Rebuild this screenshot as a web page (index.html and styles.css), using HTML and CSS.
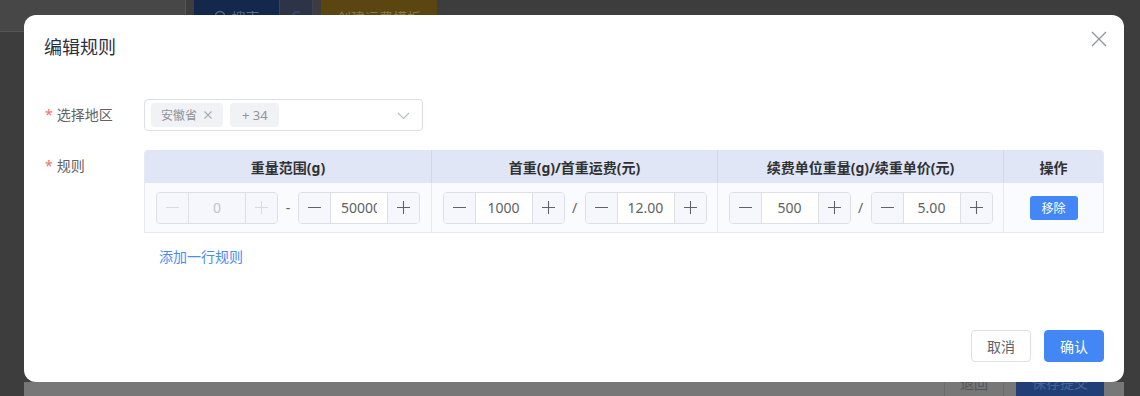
FILE: index.html
```html
<!DOCTYPE html>
<html lang="zh-CN">
<head>
  <meta charset="UTF-8">
  <title>编辑规则</title>
  <link rel="stylesheet" href="styles.css">
</head>
<body>
  <!-- page behind the dialog, already dimmed -->
  <div class="page">
    <div class="toolbar">
      <div class="tb-input"></div>
      <div class="tb-btn tb-search">
        <svg width="14" height="14" viewBox="0 0 14 14"><circle cx="6" cy="6" r="4.5" fill="none" stroke="#5a6a85" stroke-width="1.5"/></svg>
        搜索
      </div>
      <div class="tb-btn tb-refresh">C</div>
      <div class="tb-btn tb-create">创建运费模板</div>
    </div>
    <div class="page-main"></div>
    <div class="page-foot">
      <div class="pf-btn pf-back">退回</div>
      <div class="pf-btn pf-save">保存提交</div>
    </div>
  </div>

  <div class="dialog">
    <div class="dialog-header">
      <span class="dialog-title">编辑规则</span>
      <svg class="dialog-close" width="16" height="16" viewBox="0 0 16 16">
        <path d="M1 1 L15 15 M15 1 L1 15" stroke="#909399" stroke-width="1.3" fill="none"/>
      </svg>
    </div>

    <div class="dialog-body">
      <div class="form-item">
        <label class="form-label"><span class="req">*</span>选择地区</label>
        <div class="select">
          <span class="tag">安徽省
            <svg class="tag-close" width="10" height="10" viewBox="0 0 10 10"><path d="M1.5 1.5 L8.5 8.5 M8.5 1.5 L1.5 8.5" stroke="#a8abb2" stroke-width="1.1"/></svg>
          </span>
          <span class="tag tag-more">+ 34</span>
          <svg class="select-arrow" width="13" height="13" viewBox="0 0 13 13"><path d="M1 4 L6.5 9.5 L12 4" stroke="#b8bcc6" stroke-width="1.1" fill="none"/></svg>
        </div>
      </div>

      <div class="form-item">
        <label class="form-label"><span class="req">*</span>规则</label>
        <div class="rule-table">
          <div class="th">重量范围(g)</div>
          <div class="th">首重(g)/首重运费(元)</div>
          <div class="th">续费单位重量(g)/续重单价(元)</div>
          <div class="th">操作</div>

          <div class="td">
            <div class="num is-disabled">
              <span class="num-btn"><svg width="13" height="13" viewBox="0 0 13 13"><path d="M0 6.5 H13" stroke="currentColor" stroke-width="1.1"/></svg></span>
              <input class="num-input" value="0" disabled>
              <span class="num-btn"><svg width="13" height="13" viewBox="0 0 13 13"><path d="M0 6.5 H13 M6.5 0 V13" stroke="currentColor" stroke-width="1.1"/></svg></span>
            </div>
            <span class="sep">-</span>
            <div class="num">
              <span class="num-btn"><svg width="13" height="13" viewBox="0 0 13 13"><path d="M0 6.5 H13" stroke="currentColor" stroke-width="1.1"/></svg></span>
              <input class="num-input" value="50000">
              <span class="num-btn"><svg width="13" height="13" viewBox="0 0 13 13"><path d="M0 6.5 H13 M6.5 0 V13" stroke="currentColor" stroke-width="1.1"/></svg></span>
            </div>
          </div>

          <div class="td">
            <div class="num">
              <span class="num-btn"><svg width="13" height="13" viewBox="0 0 13 13"><path d="M0 6.5 H13" stroke="currentColor" stroke-width="1.1"/></svg></span>
              <input class="num-input" value="1000">
              <span class="num-btn"><svg width="13" height="13" viewBox="0 0 13 13"><path d="M0 6.5 H13 M6.5 0 V13" stroke="currentColor" stroke-width="1.1"/></svg></span>
            </div>
            <span class="sep">/</span>
            <div class="num">
              <span class="num-btn"><svg width="13" height="13" viewBox="0 0 13 13"><path d="M0 6.5 H13" stroke="currentColor" stroke-width="1.1"/></svg></span>
              <input class="num-input" value="12.00">
              <span class="num-btn"><svg width="13" height="13" viewBox="0 0 13 13"><path d="M0 6.5 H13 M6.5 0 V13" stroke="currentColor" stroke-width="1.1"/></svg></span>
            </div>
          </div>

          <div class="td">
            <div class="num">
              <span class="num-btn"><svg width="13" height="13" viewBox="0 0 13 13"><path d="M0 6.5 H13" stroke="currentColor" stroke-width="1.1"/></svg></span>
              <input class="num-input" value="500">
              <span class="num-btn"><svg width="13" height="13" viewBox="0 0 13 13"><path d="M0 6.5 H13 M6.5 0 V13" stroke="currentColor" stroke-width="1.1"/></svg></span>
            </div>
            <span class="sep">/</span>
            <div class="num">
              <span class="num-btn"><svg width="13" height="13" viewBox="0 0 13 13"><path d="M0 6.5 H13" stroke="currentColor" stroke-width="1.1"/></svg></span>
              <input class="num-input" value="5.00">
              <span class="num-btn"><svg width="13" height="13" viewBox="0 0 13 13"><path d="M0 6.5 H13 M6.5 0 V13" stroke="currentColor" stroke-width="1.1"/></svg></span>
            </div>
          </div>

          <div class="td">
            <button class="btn-remove">移除</button>
          </div>
        </div>
      </div>

      <a class="add-link">添加一行规则</a>
    </div>

    <div class="dialog-footer">
      <button class="btn">取消</button>
      <button class="btn btn-primary">确认</button>
    </div>
  </div>
</body>
</html>
```

FILE: styles.css
```css
* {
  box-sizing: border-box;
}

body {
  margin: 0;
  height: 396px;
  overflow: hidden;
  background: #3d3d3d;
  font-family: "Noto Sans", "Noto Sans CJK SC", sans-serif;
  font-size: 14px;
  color: #606266;
}

/* Background page (dimmed) */
.page {
  height: 396px;
  display: flex;
  flex-direction: column;
}

.toolbar {
  height: 15px;
  display: flex;
  align-items: flex-start;
}

.tb-input {
  width: 186px;
  height: 32px;
  background: #474747;
  border: 1px solid #565656;
  border-left: none;
  border-top: none;
  border-radius: 0 0 4px 0;
  margin-right: 8px;
}

.tb-btn {
  height: 34px;
  display: flex;
  align-items: center;
  justify-content: center;
  gap: 4px;
  font-size: 14px;
  border-radius: 0 0 4px 4px;
  position: relative;
}

.tb-search {
  width: 85px;
  background: #13284a;
  color: #5a6a85;
  border-radius: 0 0 0 4px;
}

.tb-refresh {
  width: 34px;
  background: #2c3446;
  color: #31466e;
  font-weight: 700;
  font-size: 16px;
  border: 1px solid #39435a;
  border-top: none;
  border-radius: 0 0 4px 0;
  margin-right: 8px;
}

.tb-create {
  width: 116px;
  background: #5b4511;
  color: #8a7744;
}

.page-main {
  flex: 1;
}

.page-foot {
  height: 14px;
  margin: 0 16px 0 24px;
  background: #777;
  display: flex;
  justify-content: flex-end;
  align-items: flex-end;
  gap: 12px;
  padding-right: 20px;
}

.pf-btn {
  height: 32px;
  border-radius: 4px 4px 0 0;
  display: flex;
  align-items: center;
  justify-content: center;
  font-size: 14px;
  padding-top: 4px;
}

.pf-back {
  width: 60px;
  border: 1px solid #6c6c6c;
  border-bottom: none;
  color: #555;
}

.pf-save {
  width: 88px;
  background: #213f76;
  color: #4a6393;
}

/* Dialog */
.dialog {
  position: absolute;
  left: 24px;
  top: 15px;
  width: 1100px;
  height: 367px;
  background: #fff;
  border-radius: 12px;
  display: flex;
  flex-direction: column;
  z-index: 2;
}

.dialog-header {
  padding: 20px 20px 10px;
  position: relative;
}

.dialog-title {
  font-size: 18px;
  line-height: 24px;
  color: #2c3142;
}

.dialog-close {
  position: absolute;
  top: 16px;
  right: 17px;
}

.dialog-body {
  padding: 30px 20px 0;
}

.form-item {
  display: flex;
  margin-bottom: 19px;
}

.form-label {
  width: 100px;
  flex-shrink: 0;
  line-height: 32px;
  color: #606266;
  padding-left: 1px;
}

.req {
  color: #f56c6c;
  margin-right: 4px;
}

.select {
  width: 279px;
  height: 32px;
  border: 1px solid #dcdfe6;
  border-radius: 4px;
  display: flex;
  align-items: center;
  gap: 7px;
  padding: 0 12px 0 6px;
}

.tag {
  height: 24px;
  display: inline-flex;
  align-items: center;
  padding: 0 10px;
  background: #f0f2f5;
  border-radius: 4px;
  font-size: 12px;
  color: #909399;
}

.tag-more {
  padding: 0 11px 0 12px;
  font-size: 13px;
}

.tag-close {
  margin-left: 6px;
}

.select-arrow {
  margin-left: auto;
}

/* rule table */
.rule-table {
  flex: 1;
  display: grid;
  grid-template-columns: 287px 286px 286px 1fr;
  grid-template-rows: 33px 49px;
  border: 1px solid #e6e9f2;
  border-top: none;
  border-radius: 4px 4px 0 0;
  overflow: hidden;
}

.th {
  background: #e1e6f6;
  display: flex;
  align-items: center;
  justify-content: center;
  font-weight: 700;
  color: #303133;
  border-right: 1px solid #d3d8e8;
}

.td {
  background: #fafbff;
  display: flex;
  align-items: center;
  justify-content: center;
  gap: 7px;
  border-right: 1px solid #e6e9f2;
}

.th:nth-child(4),
.td:last-child {
  border-right: none;
}

.sep {
  width: 6px;
  text-align: center;
  color: #606266;
}

.num {
  width: 122px;
  height: 32px;
  display: flex;
  border: 1px solid #dcdfe6;
  border-radius: 4px;
  overflow: hidden;
  background: #fff;
}

.num-btn {
  width: 32px;
  flex-shrink: 0;
  display: flex;
  align-items: center;
  justify-content: center;
  background: #f5f7fc;
  color: #606266;
}

.num-btn:first-child {
  border-right: 1px solid #dcdfe6;
}

.num-btn:last-child {
  border-left: 1px solid #dcdfe6;
}

.num-input {
  width: 56px;
  min-width: 0;
  flex: 1;
  border: none;
  outline: none;
  padding: 0 10px;
  font: inherit;
  font-size: 14px;
  color: #606266;
  text-align: center;
  background: #fff;
}

.num.is-disabled,
.num.is-disabled .num-input,
.num.is-disabled .num-btn {
  background: #f5f7fc;
  color: #c0c4cc;
}

.num.is-disabled .num-btn {
  color: #d6dae2;
}

.btn-remove {
  width: 48px;
  height: 24px;
  border: none;
  border-radius: 3px;
  background: #4387f6;
  color: #fff;
  font: inherit;
  font-size: 12px;
  padding: 0;
}

.add-link {
  display: block;
  margin: -5px 0 0 115px;
  line-height: 20px;
  color: #4a8cf7;
}

.dialog-footer {
  margin-top: auto;
  display: flex;
  justify-content: flex-end;
  gap: 13px;
  padding: 0 20px 20px;
}

.btn {
  width: 60px;
  height: 32px;
  border: 1px solid #dcdfe6;
  border-radius: 4px;
  background: #fff;
  color: #606266;
  font: inherit;
  font-size: 14px;
  padding: 0;
}

.btn-primary {
  background: #4387f6;
  border-color: #4387f6;
  color: #fff;
}
```
